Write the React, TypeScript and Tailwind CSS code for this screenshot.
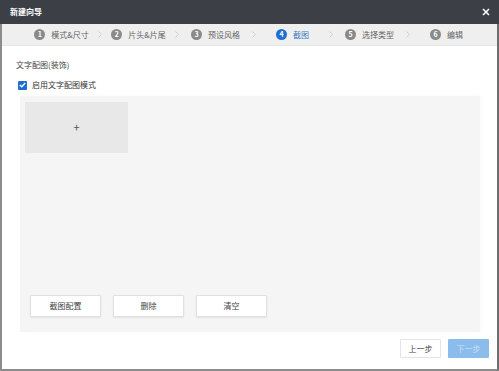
import React from 'react';

const steps = ['模式&尺寸', '片头&片尾', '预设风格', '截图', '选择类型', '编辑'];
const active = 3;

function Chevron() {
  return (
    <div className="w-0 flex justify-center">
      <svg width="4" height="7" viewBox="0 0 4 7" fill="none" className="shrink-0">
        <path d="M0.5 0.5L3.5 3.5L0.5 6.5" stroke="#cfcfcf" strokeWidth="1" />
      </svg>
    </div>
  );
}

function CloseIcon() {
  return (
    <svg width="8" height="8" viewBox="0 0 8 8" fill="none">
      <path d="M1 1L7 7M7 1L1 7" stroke="#ffffff" strokeWidth="1.6" />
    </svg>
  );
}

export default function App() {
  return (
    <div
      className="w-[499px] h-[371px] flex flex-col bg-white text-[8px] leading-[12px] text-[#444]"
      style={{ fontFamily: '"Noto Sans CJK SC", "Noto Sans", sans-serif' }}
    >
      {/* Title bar */}
      <div className="h-[24px] shrink-0 bg-[#3c4046] flex items-center justify-between pl-[10px] pr-[9px]">
        <span className="text-white font-bold text-[8px]">新建向导</span>
        <CloseIcon />
      </div>

      <div className="flex-1 flex flex-col border-x-2 border-b-2 border-[#8c8c8c] border-r-[#6e6e6e]">
        {/* Steps */}
        <div className="h-[22px] shrink-0 bg-[#efefef] border-b border-[#e6e6e6] flex items-center">
          <div className="ml-[21px] w-[462px] flex items-center">
            {steps.map((s, i) => (
              <React.Fragment key={s}>
                {i > 0 && <Chevron />}
                <div className="flex-1 flex items-center justify-center gap-[6px]">
                  <span
                    className={
                      'w-[11px] h-[11px] rounded-full flex items-center justify-center text-white text-[7px] leading-none font-bold ' +
                      (i === active ? 'bg-[#1f6fd1]' : 'bg-[#8a8a8a]')
                    }
                  >
                    {i + 1}
                  </span>
                  <span className={i === active ? 'text-[#3b78c6]' : 'text-[#666]'}>{s}</span>
                </div>
              </React.Fragment>
            ))}
          </div>
        </div>

        {/* Body */}
        <div className="flex-1 flex flex-col">
          <div className="mt-[13px] pl-[14px] text-[#444]">文字配图(装饰)</div>

          <label className="mt-[8px] pl-[16px] flex items-center gap-[5px]">
            <span className="w-[9px] h-[9px] rounded-[1px] bg-[#1f6fd1] flex items-center justify-center">
              <svg width="7" height="6" viewBox="0 0 7 6" fill="none">
                <path d="M0.8 3L2.7 4.8L6.2 1" stroke="#ffffff" strokeWidth="1.4" />
              </svg>
            </span>
            <span className="text-[#333]">启用文字配图模式</span>
          </label>

          {/* Image panel */}
          <div className="mt-[5px] ml-[18px] w-[460px] h-[236px] bg-[#f5f5f5] shadow-[2px_0_4px_rgba(0,0,0,0.02)] flex flex-col justify-between">
            <div className="pt-[6px] pl-[5px]">
              <div className="w-[103px] h-[51px] bg-[#e8e8e8] flex items-center justify-center text-[#555] text-[11px] leading-none">
                +
              </div>
            </div>
            <div className="pl-[10px] pb-[15px] flex gap-[12px]">
              {['截图配置', '删除', '清空'].map((b) => (
                <button
                  key={b}
                  className="w-[71px] h-[22px] bg-white border border-[#e0e0e0] rounded-[1px] shadow-[0_1px_2px_rgba(0,0,0,0.08)] text-[8px] text-[#444]"
                >
                  {b}
                </button>
              ))}
            </div>
          </div>

          {/* Footer */}
          <div className="mt-[7px] pr-[8px] flex justify-end gap-[7px]">
            <button className="w-[41px] h-[19px] bg-white border border-[#e4e4e4] rounded-[1px] text-[8px] text-[#444]">
              上一步
            </button>
            <button className="w-[41px] h-[19px] bg-[#8bbcec] rounded-[1px] text-[8px] text-[#c8e0f7]">
              下一步
            </button>
          </div>
        </div>
      </div>
    </div>
  );
}
